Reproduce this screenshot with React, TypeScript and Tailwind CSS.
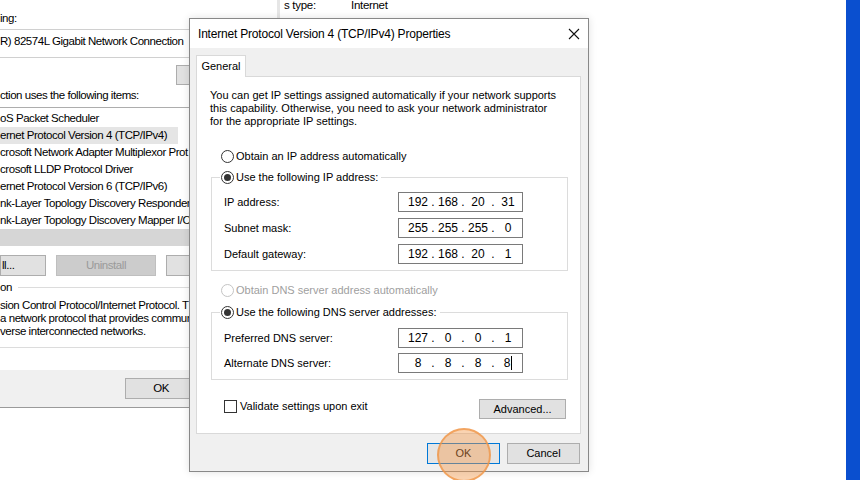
import { Fragment, type ReactNode } from 'react';

const sans = "font-[family-name:'Liberation_Sans',Arial,sans-serif]";

function Radio({ checked, disabled }: { checked?: boolean; disabled?: boolean }) {
  return (
    <span
      className={`flex h-[13px] w-[13px] shrink-0 items-center justify-center rounded-full border bg-white ${
        disabled ? 'border-[#c4c4c4]' : 'border-[#333333]'
      }`}
    >
      {checked && <span className="h-[7px] w-[7px] rounded-full bg-[#333333]" />}
    </span>
  );
}

function IpBox({ parts, caret }: { parts: string[]; caret?: boolean }) {
  return (
    <div className="flex h-[20px] w-[125px] items-center border border-[#7a7a7a] bg-white pl-[7px] text-[12px] leading-none">
      {parts.map((p, i) => (
        <Fragment key={i}>
          {i > 0 && <span className="w-[6px] text-center">.</span>}
          <span className="flex w-[24px] items-center justify-center">
            {p}
            {caret && i === 3 && <span className="ml-px h-[14px] w-px bg-black" />}
          </span>
        </Fragment>
      ))}
    </div>
  );
}

function Row({ label, children }: { label: string; children: ReactNode }) {
  return (
    <div className="flex items-center">
      <span className="w-[174px]">{label}</span>
      {children}
    </div>
  );
}

function Group({ legend, children }: { legend: string; children: ReactNode }) {
  return (
    <fieldset className="ml-px w-[357px] border border-[#dcdcdc] px-[12px] pb-[6px]">
      <legend className="-ml-[4px] pl-px pr-[3px]">
        <span className="flex h-[15px] items-center gap-[2px]">
          <Radio checked />
          {legend}
        </span>
      </legend>
      {children}
    </fieldset>
  );
}

function BackWindow() {
  // only the part left of the front dialog is visible
  const items = [
    'oS Packet Scheduler',
    'ernet Protocol Version 4 (TCP/IPv4)',
    'crosoft Network Adapter Multiplexor Prot',
    'crosoft LLDP Protocol Driver',
    'ernet Protocol Version 6 (TCP/IPv6)',
    'nk-Layer Topology Discovery Responder',
    'nk-Layer Topology Discovery Mapper I/O',
  ];

  return (
    <div className="absolute left-0 top-0 flex w-[190px] flex-col overflow-hidden border-b border-[#9a9a9a] text-[11.5px] tracking-[-0.45px] text-black">
      <div className="flex h-[370px] flex-col bg-white">
        <div className="mt-[11px] h-[15px] leading-[15px]">ing:</div>
        <div className="mt-[3px] h-[29px] whitespace-nowrap border-y border-[#d0d0d0] pt-[4px] leading-[15px]">
          R) 82574L Gigabit Network Connection
        </div>
        <div className="ml-[176px] mt-[7px] h-[20px] w-[20px] shrink-0 border border-[#adadad] bg-[#e1e1e1]" />
        <div className="mt-[3px] h-[15px] whitespace-nowrap leading-[15px]">ction uses the following items:</div>

        {/* component list */}
        <div className="mt-[4px] border-t border-[#adadad] pt-[2px]">
          {items.map((t, i) => (
            <div
              key={t}
              className={`h-[17px] w-[178px] whitespace-nowrap leading-[17px] ${i === 1 ? 'bg-[#e5e5e5]' : ''}`}
            >
              {t}
            </div>
          ))}
          <div className="h-[17px] bg-[#d6d6d6]" />
        </div>

        <div className="mt-[9px] flex h-[21px] gap-[10px]">
          <div className="flex w-[46px] shrink-0 items-center border border-[#adadad] bg-[#e1e1e1] pl-px">ll...</div>
          <div className="flex w-[100px] shrink-0 items-center justify-center border border-[#bfbfbf] bg-[#cccccc] text-[#9a9a9a]">
            Uninstall
          </div>
          <div className="w-[30px] shrink-0 border border-[#adadad] bg-[#e1e1e1]" />
        </div>

        <div className="mt-[4px] flex h-[15px] items-center leading-[15px]">
          <span>on</span>
          <span className="ml-[6px] h-px flex-1 bg-[#dcdcdc]" />
        </div>
        <div className="mt-[4px] whitespace-nowrap leading-[13px]">
          <div>sion Control Protocol/Internet Protocol. T</div>
          <div>a network protocol that provides commun</div>
          <div>verse interconnected networks.</div>
        </div>
        <div className="mt-[9px] h-px bg-[#dcdcdc]" />
      </div>
      <div className="flex h-[37px] bg-[#f0f0f0] pl-[125px] pt-[8px]">
        <div className="flex h-[21px] w-[72px] shrink-0 items-center justify-center border border-[#adadad] bg-[#e1e1e1]">
          OK
        </div>
      </div>
    </div>
  );
}

export default function App() {
  return (
    <div className={`relative h-[480px] w-[860px] overflow-hidden bg-white text-black ${sans}`}>
      <BackWindow />

      {/* network status window behind */}
      <div className="absolute left-[277px] top-0 flex h-[18px] items-start border-l-[3px] border-[#e6e6e6] pl-[4px] text-[11.5px] leading-[11px] tracking-[-0.3px]">
        <span className="w-[67px]">s type:</span>
        <span>Internet</span>
      </div>

      {/* TCP/IPv4 properties dialog */}
      <div className="absolute left-[189px] top-[18px] flex h-[454px] w-[400px] flex-col border border-[#888888] bg-[#f0f0f0] shadow-[0_0_8px_rgba(0,0,0,0.12)]">
        <div className="flex h-[29px] items-center justify-between bg-white pl-[8px] pr-[8px]">
          <span className="text-[12px] tracking-[-0.2px]">Internet Protocol Version 4 (TCP/IPv4) Properties</span>
          <svg width="12" height="12" viewBox="0 0 12 12">
            <path d="M1 1L11 11M11 1L1 11" stroke="#111" strokeWidth="1.1" />
          </svg>
        </div>

        <div className="flex flex-1 flex-col px-[6px] pt-[7px]">
          <div className="flex">
            <div className="relative z-10 -mb-px flex h-[22px] w-[50px] items-center justify-center border border-b-0 border-[#d9d9d9] bg-white text-[11px]">
              General
            </div>
          </div>

          <div className="flex h-[358px] w-[385px] flex-col border border-[#d9d9d9] bg-white px-[13px] pt-[12px] text-[11px]">
            <p className="leading-[13px]">
              You can get IP settings assigned automatically if your network supports
              <br />
              this capability. Otherwise, you need to ask your network administrator
              <br />
              for the appropriate IP settings.
            </p>

            <div className="ml-[11px] mt-[21px] flex h-[15px] items-center gap-[2px]">
              <Radio />
              Obtain an IP address automatically
            </div>

            <div className="mt-[6px]">
              <Group legend="Use the following IP address:">
                <div className="mt-[7px] flex flex-col gap-[6px]">
                  <Row label="IP address:">
                    <IpBox parts={['192', '168', '20', '31']} />
                  </Row>
                  <Row label="Subnet mask:">
                    <IpBox parts={['255', '255', '255', '0']} />
                  </Row>
                  <Row label="Default gateway:">
                    <IpBox parts={['192', '168', '20', '1']} />
                  </Row>
                </div>
              </Group>
            </div>

            <div className="ml-[11px] mt-[12px] flex h-[15px] items-center gap-[2px] text-[#a0a0a0]">
              <Radio disabled />
              Obtain DNS server address automatically
            </div>

            <div className="mt-[7px]">
              <Group legend="Use the following DNS server addresses:">
                <div className="mt-[8px] flex flex-col gap-[5px]">
                  <Row label="Preferred DNS server:">
                    <IpBox parts={['127', '0', '0', '1']} />
                  </Row>
                  <Row label="Alternate DNS server:">
                    <IpBox parts={['8', '8', '8', '8']} caret />
                  </Row>
                </div>
              </Group>
            </div>

            <div className="mt-[19px] flex items-start justify-between pl-[14px] pr-px">
              <div className="flex h-[14px] items-center gap-[3px]">
                <span className="h-[13px] w-[13px] border border-[#333333] bg-white" />
                Validate settings upon exit
              </div>
              <div className="flex h-[20px] w-[87px] items-center justify-center border border-[#adadad] bg-[#e1e1e1]">
                Advanced...
              </div>
            </div>
          </div>

          <div className="mt-[9px] flex justify-end gap-[7px] pr-[2px] text-[11px]">
            <div className="flex h-[21px] w-[73px] items-center justify-center border border-[#0078d7] bg-[#e5e5e5]">OK</div>
            <div className="flex h-[21px] w-[73px] items-center justify-center border border-[#adadad] bg-[#e1e1e1]">Cancel</div>
          </div>
        </div>
      </div>

      {/* click highlight */}
      <div className="absolute left-[437px] top-[428px] h-[54px] w-[54px] rounded-full border-2 border-[rgba(240,150,70,0.75)] bg-[rgba(242,150,70,0.42)]" />

      {/* right edge bar */}
      <div className="absolute right-0 top-0 h-full w-[14px] bg-[#0a4fcf]" />
    </div>
  );
}
